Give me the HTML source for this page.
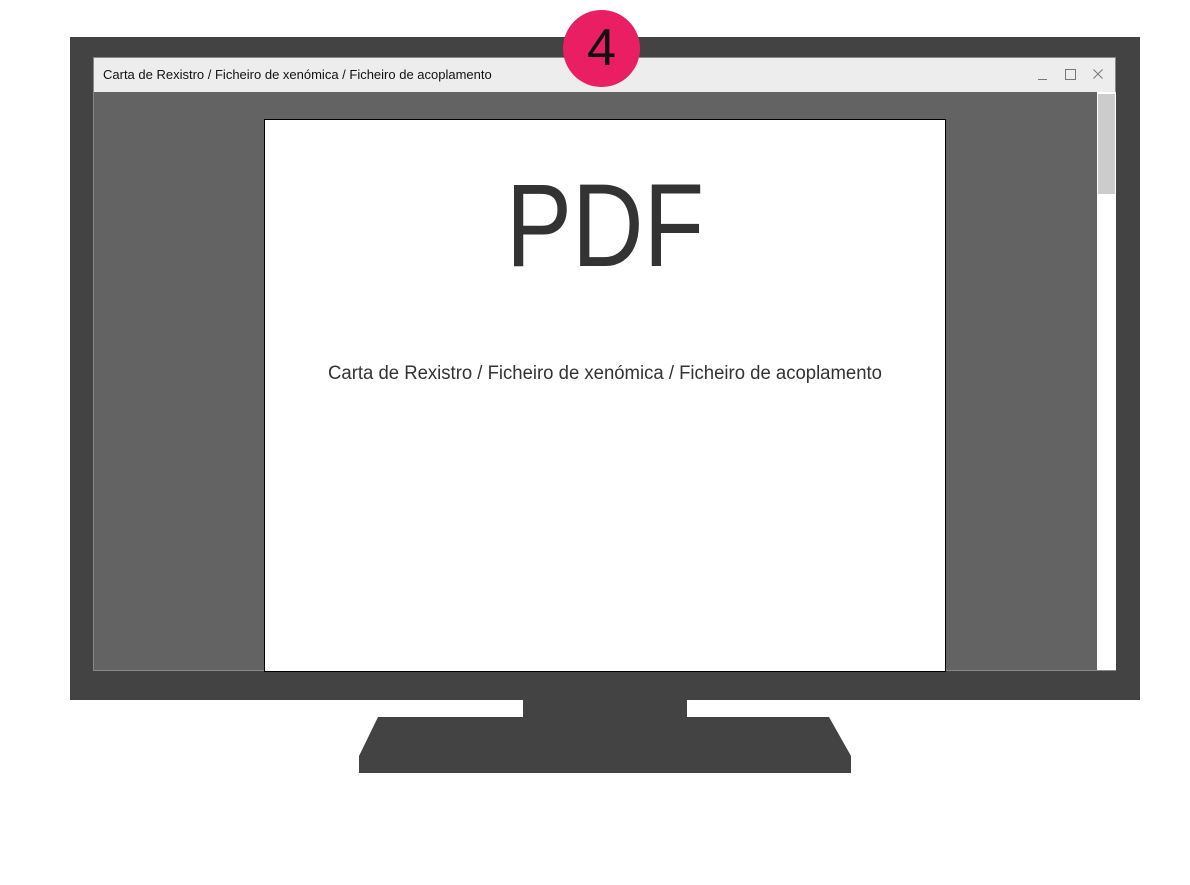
<!DOCTYPE html>
<html><head><style>
body{margin:0;width:1190px;height:885px;background:#fff;position:relative;overflow:hidden;font-family:"Liberation Sans",sans-serif}
div{position:absolute;box-sizing:border-box}
</style></head><body>
<div style="left:70px;top:37px;width:1070px;height:663px;background:#434343"></div>
<div style="left:93px;top:57px;width:1023px;height:614px;background:#ededed;border:1px solid #888"></div>
<div style="left:103px;top:67px;font-size:13px;color:#111;white-space:nowrap">Carta de Rexistro / Ficheiro de xenómica / Ficheiro de acoplamento</div>
<div style="left:1038px;top:79px;width:9px;height:1px;background:#777"></div>
<div style="left:1065px;top:69px;width:11px;height:11px;border:1px solid #777"></div>
<svg style="position:absolute;left:1093px;top:69px" width="10" height="10"><path d="M0.5 0.5L9.5 9.5M9.5 0.5L0.5 9.5" stroke="#777" stroke-width="1"/></svg>
<div style="left:94px;top:92px;width:1003px;height:578px;background:#636363"></div>
<div style="left:1097px;top:92px;width:19px;height:578px;background:#fff"></div>
<div style="left:1098px;top:94px;width:17px;height:100px;background:#ccc"></div>
<div style="left:264px;top:119px;width:682px;height:553px;background:#fff;border:1px solid #000"></div>
<div style="left:264px;top:158px;width:682px;text-align:center;font-size:118px;color:#333;line-height:136px;transform:scaleX(0.84)">PDF</div>
<div style="left:264px;top:363px;width:682px;text-align:center;font-size:19px;color:#333;transform:scaleX(0.975)">Carta de Rexistro / Ficheiro de xenómica / Ficheiro de acoplamento</div>
<div style="left:563px;top:10px;width:77px;height:77px;border-radius:50%;background:#e91e63;text-align:center;font-size:52px;line-height:77px;color:#111">4</div>
<svg style="position:absolute;left:0;top:0" width="1190" height="885"><path d="M523 700H687V717H829L851 756V773H359V756L378 717H523Z" fill="#434343"/></svg>
</body></html>
